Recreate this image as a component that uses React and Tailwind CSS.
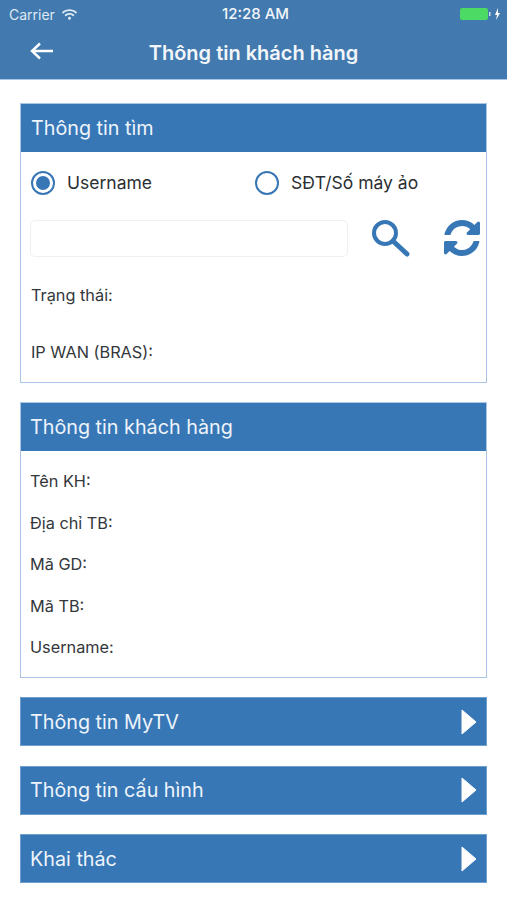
import { FaWifi } from "react-icons/fa";

const font = { fontFamily: '"Inter", "Liberation Sans", sans-serif' };

const PanelHeader = ({ title, className = "" }) => (
  <div className={`flex h-[48px] items-center bg-[#3877b6] pt-[2px] text-[19.75px] text-[#eef4fa] ${className}`}>
    {title}
  </div>
);

const Radio = ({ checked, label }) => (
  <div className="flex items-center gap-[12px]">
    <div className="flex h-[24px] w-[24px] items-center justify-center rounded-full border-2 border-[#3877b6]">
      {checked && <div className="h-[14px] w-[14px] rounded-full bg-[#3877b6]" />}
    </div>
    <span className="text-[17.5px] text-[#2b2f33]">{label}</span>
  </div>
);

const CollapsedBar = ({ title }) => (
  <div className="flex h-[49px] items-center justify-between border border-[#6f9fd0] bg-[#3877b6] pl-[9px] pr-[9px] text-[19.75px] text-[#eef4fa]">
    <span className="pt-[2px]">{title}</span>
    <svg width="16" height="26" viewBox="0 0 16 26">
      <path d="M1 1 L15 13 L1 25 Z" fill="#ffffff" stroke="#ffffff" strokeLinejoin="round" />
    </svg>
  </div>
);

export default function App() {
  return (
    <div style={font} className="min-h-[900px] w-[507px] bg-white">
      <div className="h-[80px] border-b border-[#a9c6e6] bg-[#4279ae] text-white">
        <div className="relative flex h-[28px] items-center justify-between pl-[9px] pr-[6px] text-[14px]">
          <div className="flex items-center gap-[7px] text-[#dfe9f3]">
            <span>Carrier</span>
            <FaWifi className="h-[13px] w-[15px]" />
          </div>
          <span className="absolute left-[222px] text-[15px] font-medium text-[#f2f6fa]">12:28 AM</span>
          <div className="flex items-center gap-[1px]">
            <div className="h-[12px] w-[28px] rounded-[2px] bg-[#4cd964]" />
            <svg width="12" height="12" viewBox="0 0 12 12">
              <rect x="0" y="4" width="1.5" height="4" fill="#cfe0ee" />
              <path d="M9 0 L6 7 H8 L7 12 L11 5 H9 Z" fill="#ffffff" />
            </svg>
          </div>
        </div>
        <div className="relative flex h-[51px] items-center justify-center pb-[2px]">
          <svg width="24" height="18" viewBox="0 0 24 18" className="absolute left-[30px] top-[14px]" fill="none">
            <path d="M23 9 H2 M10 1.5 L2 9 L10 16.5" stroke="#ffffff" strokeWidth="2.4" />
          </svg>
          <span className="text-[20px] font-semibold text-[#f2f6fa]">Thông tin khách hàng</span>
        </div>
      </div>

      <div className="flex flex-col px-[20px] pt-[23px]">
        <div className="h-[280px] border border-[#a9c6e6]">
          <PanelHeader title="Thông tin tìm" className="pl-[10px]" />
          <div className="flex h-[62px] items-center pl-[10px]">
            <div className="w-[224px]">
              <Radio checked label="Username" />
            </div>
            <Radio label="SĐT/Số máy ảo" />
          </div>
          <div className="mt-[5px] flex items-center pl-[9px]">
            <div className="h-[37px] w-[318px] rounded-[5px] border border-[#eef0f2] bg-white" />
            <svg width="40" height="38" viewBox="0 0 40 38" fill="none" className="ml-[22px]">
              <circle cx="15" cy="14" r="11" stroke="#3877b6" strokeWidth="4" />
              <path d="M23 22 L37 35" stroke="#3877b6" strokeWidth="5" strokeLinecap="round" />
            </svg>
            <svg width="36" height="36" viewBox="0 128 1536 1536" fill="#3877b6" className="ml-[34px]">
              <path d="M1511 1056q0 5-1 7-64 268-268 434.5t-478 166.5q-146 0-282.5-55t-243.5-157l-129 129q-19 19-45 19t-45-19-19-45v-448q0-26 19-45t45-19h448q26 0 45 19t19 45-19 45l-137 137q71 66 161 102t187 36q134 0 250-65t186-179q11-17 53-117 8-23 30-23h192q13 0 22.5 9.5t9.5 22.5zm25-800v448q0 26-19 45t-45 19h-448q-26 0-45-19t-19-45 19-45l138-138q-148-137-349-137-134 0-250 65t-186 179q-11 17-53 117-8 23-30 23h-199q-13 0-22.5-9.5t-9.5-22.5v-7q65-268 270-434.5t480-166.5q146 0 284 55.5t245 156.5l130-129q19-19 45-19t45 19 19 45z" />
            </svg>
          </div>
          <div className="pl-[10px] pt-[28px] text-[16.3px] leading-[20px] text-[#33373b]">
            <div>Trạng thái:</div>
            <div className="mt-[37px]">IP WAN (BRAS):</div>
          </div>
        </div>

        <div className="mt-[19px] h-[276px] border border-[#a9c6e6]">
          <PanelHeader title="Thông tin khách hàng" className="pl-[9px]" />
          <div className="flex flex-col gap-[21.5px] pl-[9px] pt-[20px] text-[16.3px] leading-[20px] text-[#33373b]">
            <div>Tên KH:</div>
            <div>Địa chỉ TB:</div>
            <div>Mã GD:</div>
            <div>Mã TB:</div>
            <div>Username:</div>
          </div>
        </div>

        <div className="mt-[19px] flex flex-col gap-[19.5px]">
          <CollapsedBar title="Thông tin MyTV" />
          <CollapsedBar title="Thông tin cấu hình" />
          <CollapsedBar title="Khai thác" />
        </div>
      </div>
    </div>
  );
}
